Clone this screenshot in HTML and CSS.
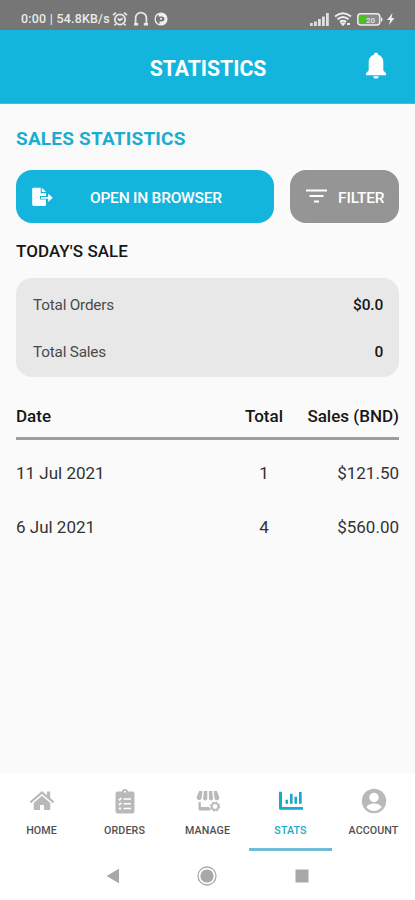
FILE: index.html
```html
<!DOCTYPE html>
<html lang="en">
<head>
<meta charset="utf-8">
<title>Statistics</title>
<link rel="stylesheet" href="styles.css">
</head>
<body>
<div class="app">
  <div class="status">
    <span class="status-text">0:00 | 54.8KB/s</span>
    <svg class="ic-alarm" width="16" height="16" viewBox="0 0 16 16" fill="none" stroke="#e8e8e8" stroke-width="1.700"><circle cx="8" cy="8.500" r="5.200"/><path d="M1 4.200 4 1.600M15 4.200 12 1.600M3.800 13l-1.300 1.500M12.200 13l1.300 1.500M5.800 7.500l2 1.800 2.800-2"/></svg>
    <svg class="ic-head" width="16" height="16" viewBox="0 0 16 16" fill="none" stroke="#e8e8e8" stroke-width="1.700"><path d="M2.600 13.500V7a5.400 5.400 0 0 1 10.800 0v6.500"/><path d="M1 13.300h4.200M10.800 13.300H15" stroke-width="2.400"/></svg>
    <svg class="ic-p" width="14" height="14" viewBox="0 0 14 14"><circle cx="7" cy="7" r="5.900" fill="none" stroke="#eee" stroke-width="1.300"/><path d="M7 1a6 6 0 0 1 0 12H5.500V9.500H8a2.500 2.500 0 0 0 0-5H4.500V2Z" fill="#eee"/><path d="M6 6h2v1.500H6z" fill="#eee"/></svg>
    <span class="grow"></span>
    <svg class="ic-signal" width="19" height="13" viewBox="0 0 19 13" fill="#e0e0e0"><path d="M0 10h2.800v3H0zM4 8.500h2.800V13H4zM8 6h2.800v7H8zM12 3.500h2.800V13H12zM16 0h2.800v13H16z"/></svg>
    <svg class="ic-wifi" width="18" height="14" viewBox="0 0 18 14" fill="none" stroke="#eee" stroke-width="2"><path d="M1 4.500Q9-2 17 4.500M3.500 7.200Q9 2.700 14.500 7.200M6 9.900Q9 7.500 12 9.900"/><path d="m8 11.500 1 1.200 1-1.200ZM13 12h3"/></svg>
    <svg class="ic-batt" width="26" height="13" viewBox="0 0 26 13"><rect x=".8" y=".8" width="22" height="11.200" rx="3" fill="#8b8b8b" stroke="#eee" stroke-width="1.500"/><path d="M3 2.700h7l-2 7.500H3z" fill="#4cc417"/><path d="M24 4.300q1.500 0 1.500 2.200T24 8.700z" fill="#eee"/><text x="9" y="9.500" class="batt-text">20</text></svg>
    <svg class="ic-bolt" width="8" height="12" viewBox="0 0 8 12" fill="#eee"><path d="M5.500 0 0 7h3.200L2 12l5.500-7H4.500Z"/></svg>
  </div>
  <header class="bar">
    <h1>STATISTICS</h1>
    <svg class="bell" width="22" height="28" viewBox="0 0 22 28" fill="#fff"><path d="M11 .5c-1.300 0-2 .8-2 2.200C5.400 3.600 3.700 6.500 3.700 10v8.500L1 21.300v1.900h20v-1.900l-2.700-2.800V10c0-3.500-1.700-6.400-5.300-7.300 0-1.400-.7-2.200-2-2.200ZM8.300 24.200a2.700 2.400 0 0 0 5.400 0Z"/></svg>
  </header>
  <main>
    <h2>SALES STATISTICS</h2>
    <div class="buttons">
      <button class="btn open">
        <svg width="21" height="20" viewBox="0 0 21 20" fill="#fff"><path fill-rule="evenodd" d="M1.500.7H8.700V6.200H14V8.900H8V12.500H14V17.600a1.300 1.300 0 0 1-1.300 1.300H1.500A1.300 1.300 0 0 1 .2 17.600V2A1.300 1.300 0 0 1 1.500.7ZM9.800.7 14 5.100H9.800Z"/><path d="M14 9.900h2.200V6.800l4.500 4-4.500 4.100v-3.200H9V9.900Z"/></svg>
        <span>OPEN IN BROWSER</span>
      </button>
      <button class="btn filter">
        <svg width="21" height="14" viewBox="0 0 21 14" fill="#fff"><path d="M0 .5h21v2H0zM3.500 6h14v2h-14zM8 11.500h5v2H8z"/></svg>
        <span>FILTER</span>
      </button>
    </div>
    <h3>TODAY'S SALE</h3>
    <dl class="card">
      <div><dt>Total Orders</dt><dd>$0.0</dd></div>
      <div><dt>Total Sales</dt><dd>0</dd></div>
    </dl>
    <div class="table">
      <div class="row head"><span>Date</span><span>Total</span><span>Sales (BND)</span></div>
      <div class="row"><span>11 Jul 2021</span><span>1</span><span>$121.50</span></div>
      <div class="row"><span>6 Jul 2021</span><span>4</span><span>$560.00</span></div>
    </div>
  </main>
  <nav class="tabs">
    <div class="tab"><svg width="26" height="26" viewBox="0 0 26 26" fill="#b9b9b9"><path d="M13 7.800 21.300 15v6a1 1 0 0 1-1 1H15v-5h-4v5H5.700a1 1 0 0 1-1-1v-6Z"/><path d="m1.400 14.400 11.600-10 11.600 10" fill="none" stroke="#b9b9b9" stroke-width="2.100"/><path d="M18 3.500h3.200v7L18 7.800z"/></svg><span>HOME</span></div>
    <div class="tab"><svg width="26" height="26" viewBox="0 0 26 26"><path fill="#b9b9b9" d="M5.500 3.500H9.800a3.300 3.300 0 0 1 6.400 0H20.500a2 2 0 0 1 2 2V23.500a2 2 0 0 1-2 2H5.500a2 2 0 0 1-2-2V5.500a2 2 0 0 1 2-2Z"/><g stroke="#fff" fill="none" stroke-width="1.500"><path d="M11.500 11h7.500M11.500 15.700h7.500M11.500 20.500h7.500M6.700 11l1 1 1.700-2M6.700 15.700l1 1 1.700-2"/><path d="M7 20.500h2" stroke-width="2"/></g><circle cx="13" cy="3.800" r="1" fill="#fff"/></svg><span>ORDERS</span></div>
    <div class="tab"><svg width="26" height="26" viewBox="0 0 26 26" fill="#b9b9b9"><path d="M4 3h3.500L6.600 10.500a2.700 2.700 0 0 1-5.100-.7ZM9 3h3.300v7.500a2.100 2.100 0 0 1-4.200 0ZM13.900 3h3.300l.9 7.500a2.100 2.100 0 0 1-4.200 0ZM18.700 3H22l2.400 6.800a2.500 2.500 0 0 1-4.900.7Z"/><path d="M3.500 14h2.300v5h8.500l1.200 3.500H5a1.500 1.500 0 0 1-1.500-1.500Z"/><circle cx="20" cy="18.500" r="3.400" fill="none" stroke="#b9b9b9" stroke-width="1.900"/><circle cx="20" cy="18.500" r="4.600" fill="none" stroke="#b9b9b9" stroke-width="1.300" stroke-dasharray="1.800 1.810"/></svg><span>MANAGE</span></div>
    <div class="tab active"><svg width="26" height="26" viewBox="0 0 26 26" fill="#18a9cb"><path d="M1 3.800h3V19H25v2.700H2.500A1.500 1.500 0 0 1 1 20.200ZM7.500 11.800H10v4H7.500zM12 5.800h2.600v10H12zM16.500 8.800H19v7h-2.500zM21 4h2.700v11.800H21z"/></svg><span>STATS</span></div>
    <div class="tab"><svg width="26" height="26" viewBox="0 0 26 26"><circle cx="13" cy="13" r="12.200" fill="#b9b9b9"/><circle cx="13" cy="9.500" r="4.700" fill="#fff"/><path d="M5.400 19.300c1-2.700 4.500-3.800 7.600-3.800s6.600 1.100 7.600 3.800a9.700 9.700 0 0 1-15.200 0Z" fill="#fff"/></svg><span>ACCOUNT</span></div>
  </nav>
  <div class="sys">
    <svg width="13" height="16" viewBox="0 0 13 16"><path d="M13 .8v14.400L.5 8Z" fill="#a8a8a8"/></svg>
    <svg width="20" height="20" viewBox="0 0 20 20"><circle cx="10" cy="10" r="9" fill="none" stroke="#a8a8a8" stroke-width="1.300"/><circle cx="10" cy="10" r="6.600" fill="#a8a8a8"/></svg>
    <svg width="14" height="14" viewBox="0 0 14 14"><rect x=".5" y=".5" width="13" height="13" fill="#a8a8a8"/></svg>
  </div>
</div>
</body>
</html>
```
FILE: styles.css
```css
* { box-sizing: border-box; }
body { margin: 0; font-family: Roboto, "Liberation Sans", sans-serif; color: #171717; }
svg { display: block; flex: none; }
h1, h2, h3, dl, dd { margin: 0; }
.app { width: 415px; height: 900px; display: flex; flex-direction: column; background: #fafafa; overflow: hidden; }

.status { height: 30px; flex: none; background: #767676; display: flex; align-items: center; padding: 8px 19px 0 21px; color: #ebebeb; }
.status-text { width: 89px; font-size: 12.400px; font-weight: 500; line-height: 14px; padding-bottom: 1px; white-space: nowrap; letter-spacing: .25px; }
.ic-alarm { margin-left: 2px; }
.ic-head { margin-left: 5px; }
.ic-p { margin-left: 5px; }
.grow { flex: 1; }
.ic-wifi { margin-left: 5px; }
.ic-batt { margin-left: 5px; }
.ic-bolt { margin-left: 4px; margin-right: 1px; }
.batt-text { font-size: 8px; font-weight: 700; fill: #ddd; }

.bar { height: 74px; flex: none; background: #14b5dc; border-bottom: 1px solid #43bedb; display: grid; grid-template-columns: 1fr auto 1fr; align-items: center; padding: 3px 28px 0; }
.bar h1 { grid-column: 2; font-size: 21.200px; font-weight: 700; line-height: 28px; color: #fff; padding: 1px 0 0 1px; }
.bell { justify-self: end; margin-bottom: 4px; }

main { flex: 1; padding: 23px 16px 0; }
h2 { font-size: 19px; line-height: 24px; font-weight: 700; color: #1badcf; letter-spacing: .2px; white-space: nowrap; }
.buttons { display: flex; gap: 16px; margin-top: 19px; }
.btn { height: 53px; border: 0; border-radius: 16px; color: #fff; font: 500 15.500px Roboto, "Liberation Sans", sans-serif; display: flex; align-items: center; white-space: nowrap; }
.open { width: 258px; background: #14b5dc; padding: 1px 16px 0; letter-spacing: -.23px; }
.open span { margin-left: 37px; }
.open span, .filter span { padding-top: 1px; }
.filter { width: 109px; background: #959595; padding: 1px 15px 0 16px; letter-spacing: -.15px; }
.filter svg { margin-bottom: 2px; }
.filter span { margin-left: 11px; }
h3 { margin-top: 17px; font-size: 17px; font-weight: 500; line-height: 22px; letter-spacing: .07px; white-space: nowrap; }
.card { margin-top: 16px; height: 99px; background: #e8e8e8; border-radius: 16px; padding: 3px 16px; }
.card div { height: 47px; display: flex; align-items: center; justify-content: space-between; }
.card dt { font-size: 15.300px; color: #4a4a4a; letter-spacing: -.2px; padding-left: 1px; }
.card dd { font-size: 15.500px; font-weight: 500; letter-spacing: -.2px; }

.table { padding-top: 21px; }
.row { height: 54px; display: grid; grid-template-columns: 1fr 50px 110px; align-items: center; font-size: 17px; color: #333; }
.row span:nth-child(2) { text-align: center; }
.row span:last-child { text-align: right; }
.head { height: 42px; align-items: start; line-height: 36px; font-weight: 500; color: #171717; border-bottom: 3px solid #9e9e9e; margin-bottom: 6px; }

.tabs { height: 78px; flex: none; background: #fff; display: grid; grid-template-columns: repeat(5, 1fr); }
.tab { padding-top: 15px; display: flex; flex-direction: column; align-items: center; font-size: 10.700px; font-weight: 500; color: #505050; letter-spacing: .1px; border-bottom: 3px solid transparent; }
.tab span { margin-top: 10px; line-height: 14px; }
.active { color: #18a9cb; border-bottom-color: #6fbcd6; }
.sys { height: 49px; flex: none; background: #fff; display: flex; align-items: center; padding: 0 106px; justify-content: space-between; }
```
